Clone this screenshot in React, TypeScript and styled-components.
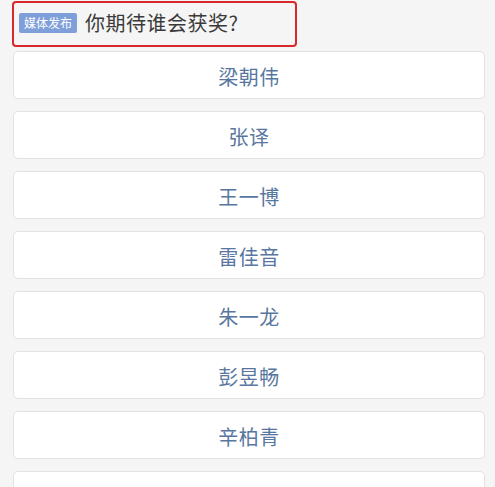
import * as React from 'react';
import styled, { createGlobalStyle } from 'styled-components';

const GlobalStyle = createGlobalStyle`
  html, body {
    margin: 0;
    padding: 0;
    background: #f5f5f5;
    font-family: "Noto Sans CJK SC", "Noto Sans", sans-serif;
  }
`;

const Page = styled.div`
  width: 495px;
  height: 487px;
  overflow: hidden;
  padding: 1px 10px 0 13px;
  box-sizing: border-box;
`;

const Header = styled.div`
  display: flex;
  align-items: center;
  gap: 8px;
  width: 285px;
  height: 46px;
  box-sizing: border-box;
  margin-left: -1px;
  padding: 0 0 2px 5px;
  border: 2.5px solid #d9282c;
  border-radius: 4px;
`;

const Badge = styled.span`
  background: #7f9fda;
  color: #fff;
  font-size: 12px;
  line-height: 20px;
  padding: 0 5px;
  border-radius: 2px;
`;

const Question = styled.span`
  color: #3a3a3a;
  font-size: 20px;
  line-height: 24px;
  letter-spacing: 0.5px;
`;

const List = styled.div`
  display: flex;
  flex-direction: column;
  gap: 12px;
  margin-top: 4px;
`;

const Option = styled.div`
  height: 48px;
  background: #fff;
  border: 1px solid #e2e2e2;
  border-radius: 5px;
  box-sizing: border-box;
  display: flex;
  align-items: center;
  justify-content: center;
  color: #5877a0;
  font-size: 20px;
  letter-spacing: 0.5px;
  padding-top: 2px;
`;

const names = ['梁朝伟', '张译', '王一博', '雷佳音', '朱一龙', '彭昱畅', '辛柏青', ''];

export default function App() {
  return (
    <>
      <GlobalStyle />
      <Page>
        <Header>
          <Badge>媒体发布</Badge>
          <Question>你期待谁会获奖?</Question>
        </Header>
        <List>
          {names.map((n, i) => (
            <Option key={i}>{n}</Option>
          ))}
        </List>
      </Page>
    </>
  );
}
